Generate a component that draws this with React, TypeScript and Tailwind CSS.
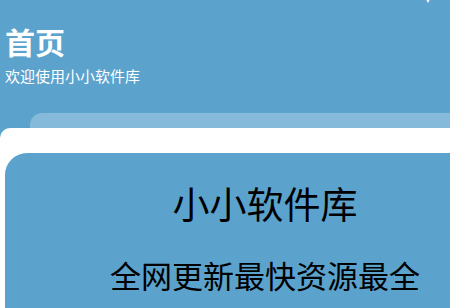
import React from "react";

export default function App() {
  return (
    <div
      className="w-[450px] h-[308px] overflow-hidden bg-[#5ba3cd] relative"
      style={{ fontFamily: '"Noto Sans CJK SC", "Noto Sans", sans-serif' }}
    >
      <div className="absolute left-[424px] top-[-4px] w-0 h-0 border-l-[4px] border-r-[4px] border-t-[7px] border-l-transparent border-r-transparent border-t-white" />
      <div className="pl-[5px] pt-[22px] text-white">
        <div className="text-[30px] leading-[38px] font-bold">首页</div>
        <div className="text-[15px] leading-[20px] mt-[6px]">欢迎使用小小软件库</div>
      </div>
      <div className="mt-[27px] ml-[30px] h-[15px] rounded-tl-[12px] bg-[#86badb]" />
      <div className="bg-white rounded-tl-[10px] pt-[25px] h-[400px]">
        <div className="ml-[5px] w-[520px] h-[300px] bg-[#5ba3cd] rounded-tl-[22px] flex flex-col items-center text-black">
          <div className="text-[37px] leading-[40px] mt-[30px]">小小软件库</div>
          <div className="text-[31px] leading-[40px] mt-[32px]">全网更新最快资源最全</div>
        </div>
      </div>
    </div>
  );
}
